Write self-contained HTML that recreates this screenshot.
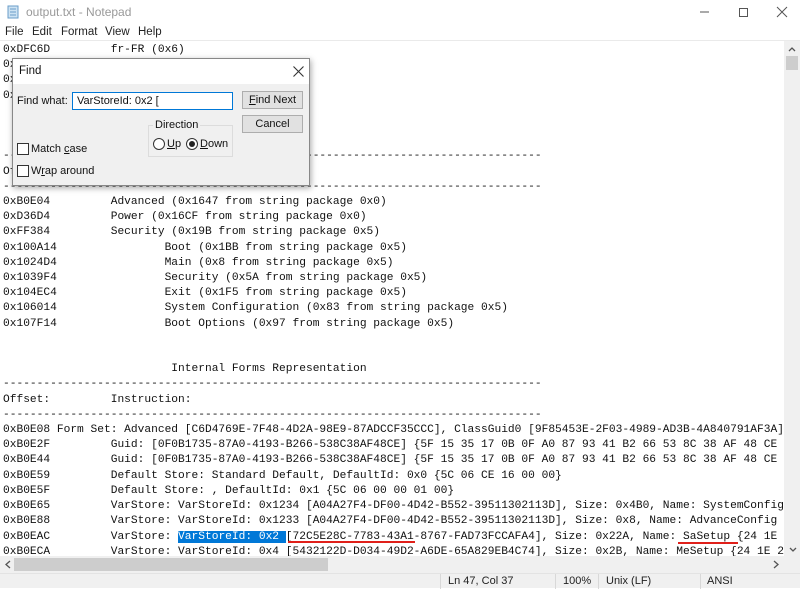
<!DOCTYPE html>
<html><head><style>
*{margin:0;padding:0;box-sizing:border-box}
body{width:800px;height:588px;overflow:hidden;background:#fff;font-family:"Liberation Sans",sans-serif;position:relative}
.title{position:absolute;left:0;top:0;width:800px;height:24px;background:#fff}
.title .t{position:absolute;left:26px;top:5px;font-size:12px;color:#999}
.menu{position:absolute;top:24px;left:0;width:800px;height:17px;font-size:11.5px;color:#222;border-bottom:1px solid #eaeaea}
.menu span{position:absolute;top:2px}
pre{position:absolute;left:3px;top:43px;width:781px;height:513px;overflow:hidden;font-family:"Liberation Mono",monospace;font-size:11.23px;line-height:15.2px;color:#111;white-space:pre}
.sel{background:#0078d7;color:#fff}
.vs{position:absolute;left:784px;top:41px;width:16px;height:515px;background:#f0f0f0}
.hs{position:absolute;left:0;top:556px;width:784px;height:17px;background:#f0f0f0}
.corner{position:absolute;left:784px;top:556px;width:16px;height:17px;background:#f0f0f0}
.status{position:absolute;left:0;top:573px;width:800px;height:15px;background:#f0f0f0;font-size:11px;color:#222;border-top:1px solid #e3e3e3}
.status span{position:absolute;top:1px}
.status i{position:absolute;top:0;width:1px;height:15px;background:#d8d8d8}
.dlg{position:absolute;left:12px;top:58px;width:298px;height:128px;background:#f0f0f0;border:1px solid #888;box-shadow:1px 2px 6px rgba(0,0,0,.35);font-size:11px;color:#111}
.dlg .tb{position:absolute;left:0;top:0;width:296px;height:25px;background:#fff}
.btn{position:absolute;width:61px;height:18px;background:#e1e1e1;border:1px solid #adadad;text-align:center;line-height:16px}
.cb{position:absolute;width:12px;height:12px;border:1px solid #333;background:#fff}
.rd{position:absolute;width:12px;height:12px;border:1px solid #333;border-radius:50%;background:#fff}
</style></head><body>
<div class="title">
<svg style="position:absolute;left:7px;top:5px" width="12" height="14"><rect x="1" y="1" width="10" height="12" fill="#cde3f3" stroke="#6a9ec8"/><line x1="3" y1="4" x2="9" y2="4" stroke="#6a9ec8"/><line x1="3" y1="7" x2="9" y2="7" stroke="#6a9ec8"/><line x1="3" y1="10" x2="9" y2="10" stroke="#6a9ec8"/></svg>
<span class="t">output.txt - Notepad</span>
<svg style="position:absolute;left:700px;top:6px" width="90" height="12"><line x1="0" y1="6" x2="9" y2="6" stroke="#555"/><rect x="39.5" y="2.5" width="8" height="8" fill="none" stroke="#555"/><path d="M77 1L87 11M87 1L77 11" stroke="#555"/></svg>
</div>
<div class="menu"><span style="left:5px">File</span><span style="left:32px">Edit</span><span style="left:61px">Format</span><span style="left:105px">View</span><span style="left:138px">Help</span></div>
<pre>0xDFC6D         fr-FR (0x6)
0x
0x
0x



--------------------------------------------------------------------------------
Offset:         String:
--------------------------------------------------------------------------------
0xB0E04         Advanced (0x1647 from string package 0x0)
0xD36D4         Power (0x16CF from string package 0x0)
0xFF384         Security (0x19B from string package 0x5)
0x100A14                Boot (0x1BB from string package 0x5)
0x1024D4                Main (0x8 from string package 0x5)
0x1039F4                Security (0x5A from string package 0x5)
0x104EC4                Exit (0x1F5 from string package 0x5)
0x106014                System Configuration (0x83 from string package 0x5)
0x107F14                Boot Options (0x97 from string package 0x5)


                         Internal Forms Representation
--------------------------------------------------------------------------------
Offset:         Instruction:
--------------------------------------------------------------------------------
0xB0E08 Form Set: Advanced [C6D4769E-7F48-4D2A-98E9-87ADCCF35CCC], ClassGuid0 [9F85453E-2F03-4989-AD3B-4A840791AF3A]
0xB0E2F         Guid: [0F0B1735-87A0-4193-B266-538C38AF48CE] {5F 15 35 17 0B 0F A0 87 93 41 B2 66 53 8C 38 AF 48 CE
0xB0E44         Guid: [0F0B1735-87A0-4193-B266-538C38AF48CE] {5F 15 35 17 0B 0F A0 87 93 41 B2 66 53 8C 38 AF 48 CE
0xB0E59         Default Store: Standard Default, DefaultId: 0x0 {5C 06 CE 16 00 00}
0xB0E5F         Default Store: , DefaultId: 0x1 {5C 06 00 00 01 00}
0xB0E65         VarStore: VarStoreId: 0x1234 [A04A27F4-DF00-4D42-B552-39511302113D], Size: 0x4B0, Name: SystemConfig
0xB0E88         VarStore: VarStoreId: 0x1233 [A04A27F4-DF00-4D42-B552-39511302113D], Size: 0x8, Name: AdvanceConfig
0xB0EAC         VarStore: <span class="sel">VarStoreId: 0x2 </span>[72C5E28C-7783-43A1-8767-FAD73FCCAFA4], Size: 0x22A, Name: SaSetup {24 1E
0xB0ECA         VarStore: VarStoreId: 0x4 [5432122D-D034-49D2-A6DE-65A829EB4C74], Size: 0x2B, Name: MeSetup {24 1E 2</pre>
<div style="position:absolute;left:288px;top:541px;width:127px;height:2px;background:#e0201a"></div>
<div style="position:absolute;left:678px;top:542px;width:60px;height:2px;background:#e0201a"></div>
<div class="vs"><svg style="position:absolute;left:4px;top:5px" width="8" height="6"><path d="M1 5L4 2L7 5" stroke="#555" fill="none" stroke-width="1.3"/></svg><div style="position:absolute;left:2px;top:15px;width:12px;height:14px;background:#cdcdcd"></div><svg style="position:absolute;left:5px;top:505px" width="8" height="8"><path d="M1 2L4 5L7 2" stroke="#555" fill="none" stroke-width="1.3"/></svg></div>
<div class="hs"><svg style="position:absolute;left:4px;top:4px" width="8" height="9"><path d="M6 1L2 4.5L6 8" stroke="#555" fill="none" stroke-width="1.3"/></svg><div style="position:absolute;left:14px;top:2px;width:314px;height:13px;background:#cdcdcd"></div><svg style="position:absolute;left:772px;top:4px" width="8" height="9"><path d="M2 1L6 4.5L2 8" stroke="#555" fill="none" stroke-width="1.3"/></svg></div>
<div class="corner"></div>
<div class="status"><i style="left:440px"></i><span style="left:448px">Ln 47, Col 37</span><i style="left:555px"></i><span style="left:563px">100%</span><i style="left:598px"></i><span style="left:606px">Unix (LF)</span><i style="left:700px"></i><span style="left:707px">ANSI</span></div>
<div class="dlg">
<div class="tb"><span style="position:absolute;left:6px;top:6px;font-size:11.5px">Find</span><svg style="position:absolute;left:280px;top:7px" width="11" height="11"><path d="M0.5 0.5L10.5 10.5M10.5 0.5L0.5 10.5" stroke="#333" stroke-width="1.1"/></svg></div>
<span style="position:absolute;left:4px;top:36px">Find what:</span>
<div style="position:absolute;left:59px;top:33px;width:161px;height:18px;background:#fff;border:1px solid #0078d7;padding:2px 0 0 4px">VarStoreId: 0x2 [</div>
<div class="btn" style="left:229px;top:32px"><u>F</u>ind Next</div>
<div class="btn" style="left:229px;top:56px">Cancel</div>
<div style="position:absolute;left:135px;top:66px;width:85px;height:32px;border:1px solid #dcdcdc"></div>
<span style="position:absolute;left:140px;top:60px;background:#f0f0f0;padding:0 2px">Direction</span>
<div class="rd" style="left:140px;top:79px"></div><span style="position:absolute;left:154px;top:79px"><u>U</u>p</span>
<div class="rd" style="left:173px;top:79px"><div style="position:absolute;left:2px;top:2px;width:6px;height:6px;border-radius:50%;background:#222"></div></div><span style="position:absolute;left:187px;top:79px"><u>D</u>own</span>
<div class="cb" style="left:4px;top:84px"></div><span style="position:absolute;left:18px;top:84px">Match <u>c</u>ase</span>
<div class="cb" style="left:4px;top:106px"></div><span style="position:absolute;left:18px;top:106px">W<u>r</u>ap around</span>
</div>
</body></html>
